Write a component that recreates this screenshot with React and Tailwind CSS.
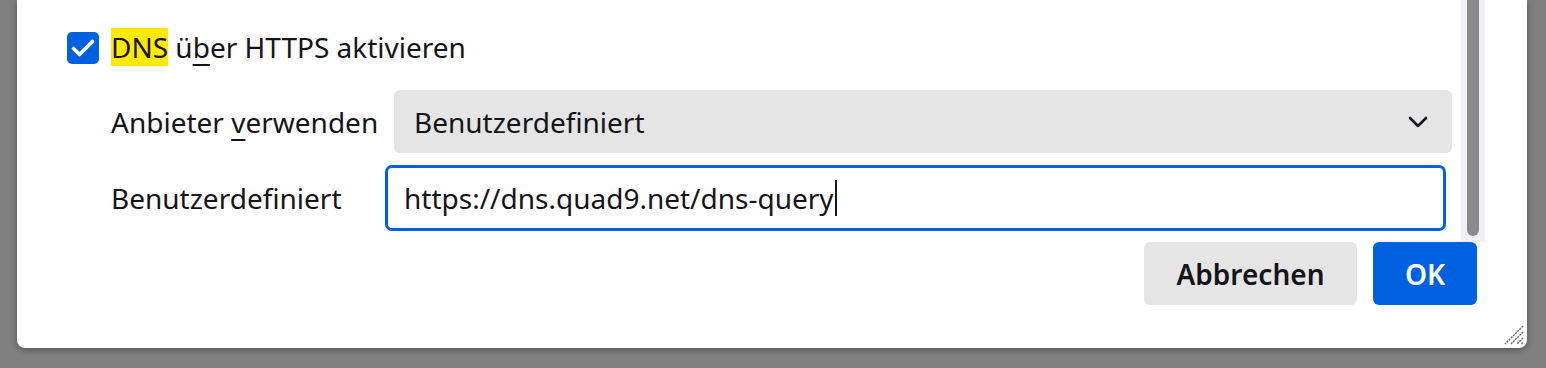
import React from "react";

const font = { fontFamily: '"Noto Sans", "Open Sans", sans-serif' };

const Chevron = () => (
  <svg width="20" height="12" viewBox="0 0 20 12" fill="none">
    <path d="M2 2l8 8 8-8" stroke="#15141a" strokeWidth="2.6" strokeLinecap="round" strokeLinejoin="round" />
  </svg>
);

const Check = () => (
  <svg width="24" height="20" viewBox="0 0 24 20" fill="none">
    <path d="M2.5 10.5l6 6L21.5 3.5" stroke="#fff" strokeWidth="3.6" strokeLinecap="round" strokeLinejoin="round" />
  </svg>
);

const Grip = () => (
  <svg width="22" height="22" viewBox="0 0 22 22">
    <path
      d="M21 3L3 21M21 9L9 21M21 15L15 21M21 19.5L19.5 21"
      stroke="#666"
      strokeWidth="1.4"
      strokeDasharray="2 1"
    />
  </svg>
);

const App = () => {
  return (
    <div className="w-[1546px] h-[368px] bg-[#808080] overflow-hidden pl-[17px]" style={font}>
      <div className="relative w-[1510px] h-[348px] bg-white rounded-b-[8px] shadow-[0_2px_6px_rgba(0,0,0,0.35)] flex flex-col text-[#15141a]">
        {/* scrolling content */}
        <div className="h-[242px] flex pr-[42px]">
          <div className="flex-1 pl-[50px] pt-[28px]">
            <label className="flex items-center gap-[12px] text-[28px] leading-[39px]">
              <span className="w-[32px] h-[32px] rounded-[5px] bg-[#0061e0] flex items-center justify-center">
                <Check />
              </span>
              <span>
                <span className="bg-[#ffe900]">DNS</span> ü<span className="underline underline-offset-[6px] decoration-[2px]">b</span>er HTTPS aktivieren
              </span>
            </label>

            <div className="grid grid-cols-[274px_1fr] pl-[44px] pr-[9px] mt-[23px] items-center gap-y-[12px] text-[28px]">
              <span>
                Anbieter <span className="underline underline-offset-[6px] decoration-[2px]">v</span>erwenden
              </span>
              <div className="ml-[9px] h-[63px] rounded-[6px] bg-[#e5e5e5] flex items-center justify-between pl-[20px] pr-[24px]">
                <span>Benutzerdefiniert</span>
                <Chevron />
              </div>

              <span>Benutzerdefiniert</span>
              <div className="mr-[6px] h-[66px] rounded-[7px] border-[3px] border-[#0061e0] flex items-center pl-[16px]">
                <span>https://dns.quad9.net/dns-query</span>
                <span className="w-[2px] h-[36px] bg-[#15141a] ml-[1px]"></span>
              </div>
            </div>
          </div>
          {/* scrollbar */}
          <div className="w-[24px] h-full bg-[#f0f0f4] flex justify-center">
            <div className="w-[12px] h-[236px] bg-[#8a8a8d] rounded-b-[6px]"></div>
          </div>
        </div>

        {/* buttons */}
        <div className="flex justify-end gap-[16px] pr-[50px]">
          <button className="w-[213px] h-[63px] rounded-[6px] bg-[#e5e5e5] text-[28px] font-semibold text-[#15141a]">
            Abbrechen
          </button>
          <button className="w-[104px] h-[63px] rounded-[6px] bg-[#0061e0] text-[28px] font-semibold text-white">
            OK
          </button>
        </div>

        <div className="absolute right-[3px] bottom-[3px]">
          <Grip />
        </div>
      </div>
    </div>
  );
};

export default App;
